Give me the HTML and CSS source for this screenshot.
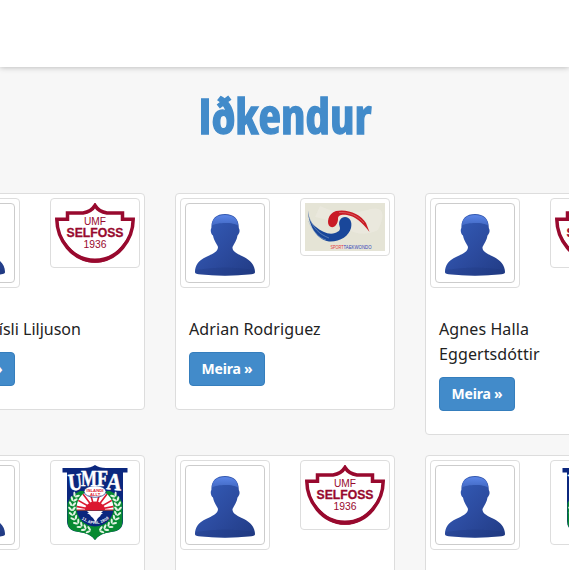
FILE: index.html
```html
<!DOCTYPE html>
<html lang="is">
<head>
<meta charset="utf-8">
<title>Iðkendur</title>
<link rel="stylesheet" href="styles.css">
</head>
<body>
<svg class="sprite" aria-hidden="true">
  <defs>
    <linearGradient id="body-fill" x1="0" y1="0" x2="1" y2="1"><stop offset="0" stop-color="#3560bd"/><stop offset=".55" stop-color="#2c4b9f"/><stop offset="1" stop-color="#213b84"/></linearGradient>
    <linearGradient id="cap-fill" x1="0" y1="0" x2="0" y2="1"><stop offset="0" stop-color="#5b85e6"/><stop offset="1" stop-color="#4269c4"/></linearGradient>
    <clipPath id="umfa-clip"><circle cx="40" cy="43" r="18.500"/></clipPath>
    <g id="leaf" fill="#e3f3e3"><ellipse cx="61.200" cy="43" rx="1.100" ry="2.600" transform="rotate(-38 61.200 43)"/><ellipse cx="64.800" cy="43" rx="1.100" ry="2.600" transform="rotate(38 64.800 43)"/></g>
    <g id="branch">
      <use href="#leaf" transform="rotate(-34 40 43)"/><use href="#leaf" transform="rotate(-22 40 43)"/><use href="#leaf" transform="rotate(-10 40 43)"/><use href="#leaf" transform="rotate(2 40 43)"/><use href="#leaf" transform="rotate(14 40 43)"/><use href="#leaf" transform="rotate(26 40 43)"/><use href="#leaf" transform="rotate(38 40 43)"/><use href="#leaf" transform="rotate(50 40 43)"/><use href="#leaf" transform="rotate(62 40 43)"/><use href="#leaf" transform="rotate(74 40 43)"/>
    </g>
  </defs>
  <symbol id="avatar" viewBox="0 0 78 78">
    <path d="M39 10C30 10 25 15 25.400 24C24 26 25 30 27 31.500C28 37 31 40 32 43C32 48 26 50 20 53C13 56 9 61 9 68Q9 70 13 70.300Q39 73 65 70.300Q69 70 69 68C69 61 64 56 58 53C52 50 46 48 46.500 43C48 40 51 36 51.500 31.500C54 29 54 26 52.800 24C53 15 48 10 39 10Z" fill="url(#body-fill)"/>
    <path d="M26 21.500C26 14.500 31 11 39 11C47 11 52 14.500 52 21.500C48 18 31 18 26 21.500Z" fill="url(#cap-fill)"/>
    <path d="M9.500 66Q39 61 68.500 66L69 68Q69 70 65 70.300Q39 73 13 70.300Q9 70 9 68Z" fill="#1d3578" opacity=".25"/>
  </symbol>
  <symbol id="selfoss" viewBox="0 0 80 60">
    <path d="M40 2.500C37 7.500 31 9.500 28 10H12.500V16.200H1.800C2 36 17 58 40 58C63 58 78 36 78.200 16.200H67.500V10H52C49 9.500 43 7.500 40 2.500Z" fill="#fff" stroke="#98092e" stroke-width="3.500"/>
    <path d="M4 29C11 47 23 59.800 40 59.800C57 59.800 69 47 76 29C67 45 57 55.500 40 55.500C23 55.500 13 45 4 29Z" fill="#98092e"/>
    <g fill="#98092e" text-anchor="middle" class="logo-text">
      <text x="40" y="22" font-size="10.500" textLength="22" lengthAdjust="spacingAndGlyphs">UMF</text>
      <text x="40" y="34" font-size="12.500" font-weight="bold" textLength="57" lengthAdjust="spacingAndGlyphs" stroke="#98092e" stroke-width=".3">SELFOSS</text>
      <text x="40" y="45" font-size="10.500" textLength="23" lengthAdjust="spacingAndGlyphs">1936</text>
    </g>
  </symbol>
  <symbol id="taekwondo" viewBox="0 0 80 48">
    <path fill="#e5e4d6" d="M0 0H80V48H0Z"/>
    <path fill="#ecebe1" d="M15 3Q38 14 62 7T73 27Q57 35 42 26T10 14Z" opacity=".6"/>
    <path d="M3 7.500C4 16 6 20 11 24C17 29 24 32 30 30C34 28.500 36 27 34.500 23C33 18 36 14 40 14C45 14 47.500 19 46 25C44 33 35 39 24 38.500C15 37 9 30 6 22C4 17 3 12 3 7.500Z" fill="#19479a"/>
    <path d="M4 14C8 25 14 31 24 35M3.500 18C8 29 14 35 21 37" fill="none" stroke="#9db2cd" stroke-width=".5"/>
    <path d="M25 23.500C21 21 23 10 31 8C42 5.500 56 11 61 20L64.500 29C58 20 50 13 42 12C36 11.500 33 12 33 16C33 21 29 26 25 23.500Z" fill="#c91b25"/>
    <path d="M34 9.500C45 9 53 13 59 20" fill="none" stroke="#e8a6a0" stroke-width=".4"/>
    <g class="logo-text" font-size="4.800"><text x="25.500" y="46" fill="#e3333b" textLength="13" lengthAdjust="spacingAndGlyphs">SPORT</text><text x="38.500" y="46" fill="#3446b8" textLength="28" lengthAdjust="spacingAndGlyphs">TAEKWONDO</text></g>
  </symbol>
  <symbol id="umfa" viewBox="0 0 80 75">
    <path d="M7.500 3H29Q36 3 40 0Q44 3 51 3H72.500V7.500H68V56Q68 66 56 67Q45 68 40 75Q35 68 24 67Q12 66 12 56V7.500H7.500Z" fill="#0b277e"/>
    <path d="M12.500 38Q16 30 25 26H55Q64 30 67.500 38V56Q68 66 56 67Q45 68 40 75Q35 68 24 67Q12 66 12.500 56Z" fill="#078a32"/>
    <use href="#branch"/>
    <use href="#branch" transform="translate(80 0) scale(-1 1)"/>
    <g clip-path="url(#umfa-clip)">
      <path fill="#fff" d="M20 22H60V45H20Z"/>
      <path d="M40 45L19 41M40 45L19 33M40 45L25 25M40 45L34 24M40 45L46 24M40 45L55 25M40 45L61 33M40 45L61 41" stroke="#db1830" stroke-width="1.600"/>
      <path d="M30 45A10 8.500 0 0 1 50 45Z" fill="#db1830"/>
      <path fill="#0b277e" d="M20 45.500H60V62H20Z"/>
      <path fill="#fff" d="M32 46H48L46 48H48L45 50.500H46L43 53L40.500 57L38 53L35 50.500H36L32 48H34Z"/>
      <path d="M20 45H60" stroke="#db1830"/>
    </g>
    <path d="M25 21H55V26Q48 21 40 21Q32 21 25 26Z" fill="#0b277e"/>
    <ellipse cx="40" cy="26.500" rx="11" ry="5.800" fill="#fff" stroke="#0b277e" stroke-width=".7"/>
    <g text-anchor="middle" class="logo-text" font-weight="bold">
      <text x="40" y="26.500" font-size="4.200" fill="#db1830" textLength="17" lengthAdjust="spacingAndGlyphs">ISLANDI</text>
      <text x="40" y="30.500" font-size="4.200" fill="#db1830">-ALLT-</text>
    </g>
    <path id="date-arc" d="M26.500 54Q40 64 53.500 54" fill="none"/>
    <text class="logo-text" font-size="4" font-weight="bold" fill="#fff"><textPath href="#date-arc" textLength="30">11. APRÍL 1909</textPath></text>
    <g class="club-text" fill="#fff" font-weight="bold" font-size="24" stroke="#fff" stroke-width=".5">
      <text x="13" y="25" textLength="14" lengthAdjust="spacingAndGlyphs" transform="rotate(-6 20 16)">U</text>
      <text x="26" y="20.500" textLength="16" lengthAdjust="spacingAndGlyphs">M</text>
      <text x="42" y="21" textLength="11" lengthAdjust="spacingAndGlyphs">F</text>
      <text x="52" y="25" textLength="15" lengthAdjust="spacingAndGlyphs" transform="rotate(6 60 16)">A</text>
    </g>
  </symbol>
</svg>
<header class="navbar"></header>
<main>
  <h1><span>Iðkendur</span></h1>
  <section class="members">
    <article class="card">
      <div class="media"><span class="thumb"><svg class="avatar"><use href="#avatar"/></svg></span><span class="thumb"><svg class="selfoss"><use href="#selfoss"/></svg></span></div>
      <div class="caption"><p class="long-name">Adam Gísli Liljuson</p><a class="btn">Meira »</a></div>
    </article>
    <article class="card">
      <div class="media"><span class="thumb"><svg class="avatar"><use href="#avatar"/></svg></span><span class="thumb"><svg class="taekwondo"><use href="#taekwondo"/></svg></span></div>
      <div class="caption"><p>Adrian Rodriguez</p><a class="btn">Meira »</a></div>
    </article>
    <article class="card">
      <div class="media"><span class="thumb"><svg class="avatar"><use href="#avatar"/></svg></span><span class="thumb"><svg class="selfoss"><use href="#selfoss"/></svg></span></div>
      <div class="caption"><p>Agnes Halla Eggertsdóttir</p><a class="btn">Meira »</a></div>
    </article>
    <article class="card">
      <div class="media"><span class="thumb"><svg class="avatar"><use href="#avatar"/></svg></span><span class="thumb"><svg class="umfa"><use href="#umfa"/></svg></span></div>
    </article>
    <article class="card">
      <div class="media"><span class="thumb"><svg class="avatar"><use href="#avatar"/></svg></span><span class="thumb"><svg class="selfoss"><use href="#selfoss"/></svg></span></div>
    </article>
    <article class="card">
      <div class="media"><span class="thumb"><svg class="avatar"><use href="#avatar"/></svg></span><span class="thumb"><svg class="umfa"><use href="#umfa"/></svg></span></div>
    </article>
  </section>
</main>
</body>
</html>
```
FILE: styles.css
```css
* { box-sizing: border-box; }
body {
  margin: 0;
  height: 570px;
  overflow: hidden;
  background: #f7f7f7;
  color: #222;
  font: 16px/25px "Noto Sans", sans-serif;
}
.sprite { position: absolute; width: 0; height: 0; }
.navbar {
  height: 67px;
  background: #fff;
  box-shadow: 0 0 6px rgba(0, 0, 0, .3);
}
h1 {
  height: 126px;
  margin: 0;
  padding-top: 21px;
  color: #428bca;
  font: bold 49px/55px "Open Sans", sans-serif;
  font-stretch: 75%;
  text-align: center;
}
h1 span {
  display: inline-block;
  transform: translateX(.5px);
  -webkit-text-stroke: 1.3px #428bca;
}
.members {
  display: grid;
  grid-template-columns: repeat(3, 220px);
  gap: 20px 30px;
  align-items: start;
  width: 720px;
  margin-left: -75px;
}
.card {
  min-height: 217px;
  padding: 4px;
  background: #fff;
  border: 1px solid #ddd;
  border-radius: 4px;
}
.media {
  display: flex;
  justify-content: space-between;
  align-items: flex-start;
  height: 110px;
}
.thumb {
  padding: 4px;
  background: #fff;
  border: 1px solid #ddd;
  border-radius: 4px;
}
.thumb svg { display: block; width: 80px; }
.thumb .avatar { height: 80px; border: 1px solid #ccc; border-radius: 4px; }
.selfoss { height: 60px; }
.taekwondo { height: 48px; }
.umfa { height: 75px; }
.caption { padding: 9px 9px 19px; }
.caption p { margin: 0 0 10px; letter-spacing: .1px; }
.caption .long-name { letter-spacing: 0; }
.btn {
  display: block;
  width: 76px;
  height: 34px;
  border: 1px solid #357ebd;
  border-radius: 4px;
  background: #428bca;
  color: #fff;
  font-size: 14px;
  font-weight: bold;
  letter-spacing: -.2px;
  line-height: 32px;
  text-align: center;
}
.logo-text { font-family: "Liberation Sans", sans-serif; }
.club-text { font-family: "Liberation Serif", serif; }
```
